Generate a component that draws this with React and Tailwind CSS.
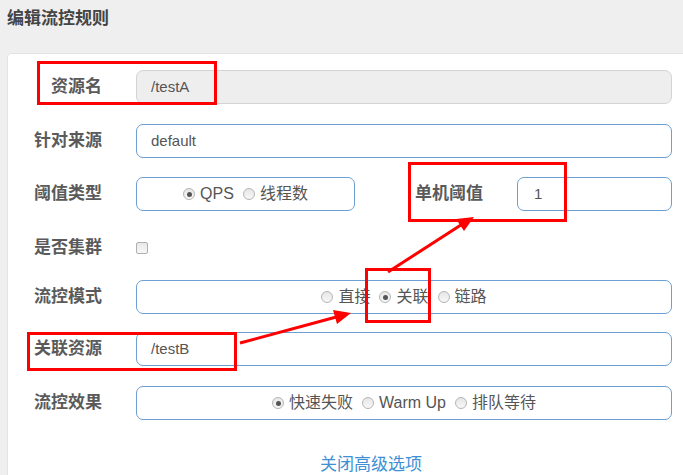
const font = { fontFamily: '"Liberation Sans", "Noto Sans CJK SC", sans-serif' }

function Radio({ checked, label }) {
  return (
    <span className="inline-flex items-center gap-[5px]">
      <span className="w-[12px] h-[12px] rounded-full border border-[#b5b5b5] bg-gradient-to-b from-[#e6e6e6] to-[#f8f8f8] flex items-center justify-center">
        {checked && <span className="w-[5px] h-[5px] rounded-full bg-[#555]" />}
      </span>
      <span>{label}</span>
    </span>
  )
}

function Label({ children, className = 'w-[94px]' }) {
  return (
    <div className={`${className} text-right text-[17px] font-semibold text-[#5a5a5a] shrink-0`}>{children}</div>
  )
}

const box = 'h-[34px] rounded-[7px] border border-[#6c9fd3] bg-white flex items-center text-[15px] text-[#555]'

export default function App() {
  return (
    <div style={font} className="relative w-[683px] h-[475px] overflow-hidden bg-[#efefef]">
      <div className="h-[53px] pl-[7px] pt-[6px] text-[17px] font-semibold text-[#444]">编辑流控规则</div>

      <div className="ml-[7px] w-[700px] h-[440px] bg-white border border-[#e3e3e3] rounded-[4px] pt-[16px]">
        {/* 资源名 */}
        <div className="flex items-center">
          <Label>资源名</Label>
          <div className="ml-[34px] w-[536px] h-[34px] rounded-[7px] border border-[#d4d4d4] bg-[#eeeeee] flex items-center pl-[14px] text-[15px] text-[#555]">/testA</div>
        </div>

        {/* 针对来源 */}
        <div className="flex items-center mt-[20px]">
          <Label>针对来源</Label>
          <div className={`${box} ml-[34px] w-[536px] pl-[14px]`}>default</div>
        </div>

        {/* 阈值类型 / 单机阈值 */}
        <div className="flex items-center mt-[19px]">
          <Label>阈值类型</Label>
          <div className={`${box} ml-[34px] w-[219px] justify-center gap-[9px] text-[16px]`}>
            <Radio checked label="QPS" />
            <Radio label="线程数" />
          </div>
          <Label className="w-[128px]">单机阈值</Label>
          <div className={`${box} ml-[34px] w-[155px] pl-[16px]`}>1</div>
        </div>

        {/* 是否集群 */}
        <div className="flex items-center mt-[20px] h-[34px]">
          <Label>是否集群</Label>
          <div className="ml-[34px] w-[12px] h-[12px] rounded-[2px] border border-[#b0b0b0] bg-gradient-to-b from-[#e8e8e8] to-[#f7f7f7]" />
        </div>

        {/* 流控模式 */}
        <div className="flex items-center mt-[15px]">
          <Label>流控模式</Label>
          <div className={`${box} ml-[34px] w-[536px] justify-center gap-[9px] text-[16px]`}>
            <Radio label="直接" />
            <Radio checked label="关联" />
            <Radio label="链路" />
          </div>
        </div>

        {/* 关联资源 */}
        <div className="flex items-center mt-[18px]">
          <Label>关联资源</Label>
          <div className={`${box} ml-[34px] w-[536px] pl-[14px]`}>/testB</div>
        </div>

        {/* 流控效果 */}
        <div className="flex items-center mt-[20px]">
          <Label>流控效果</Label>
          <div className={`${box} ml-[34px] w-[536px] justify-center gap-[9px] text-[16px]`}>
            <Radio checked label="快速失败" />
            <Radio label="Warm Up" />
            <Radio label="排队等待" />
          </div>
        </div>

        <div className="mt-[32px] pl-[312px] text-[17px] text-[#3e8fd5]">关闭高级选项</div>
      </div>

      {/* annotations */}
      <div className="absolute left-[37px] top-[61px] w-[180px] h-[44px] border-[3px] border-[#ff0000]" />
      <div className="absolute left-[408px] top-[162px] w-[159px] h-[60px] border-[3px] border-[#ff0000]" />
      <div className="absolute left-[365px] top-[268px] w-[66px] h-[55px] border-[3px] border-[#ff0000]" />
      <div className="absolute left-[27px] top-[332px] w-[210px] h-[39px] border-[3px] border-[#ff0000]" />
      <svg className="absolute left-0 top-0" width="683" height="475">
        <line x1="240" y1="343" x2="340" y2="316" stroke="#ff0000" strokeWidth="3" />
        <polygon points="351,313 333,310 337,324" fill="#ff0000" />
        <line x1="388" y1="272" x2="464" y2="223" stroke="#ff0000" strokeWidth="3" />
        <polygon points="474,217 456,219 464,231" fill="#ff0000" />
      </svg>
    </div>
  )
}
